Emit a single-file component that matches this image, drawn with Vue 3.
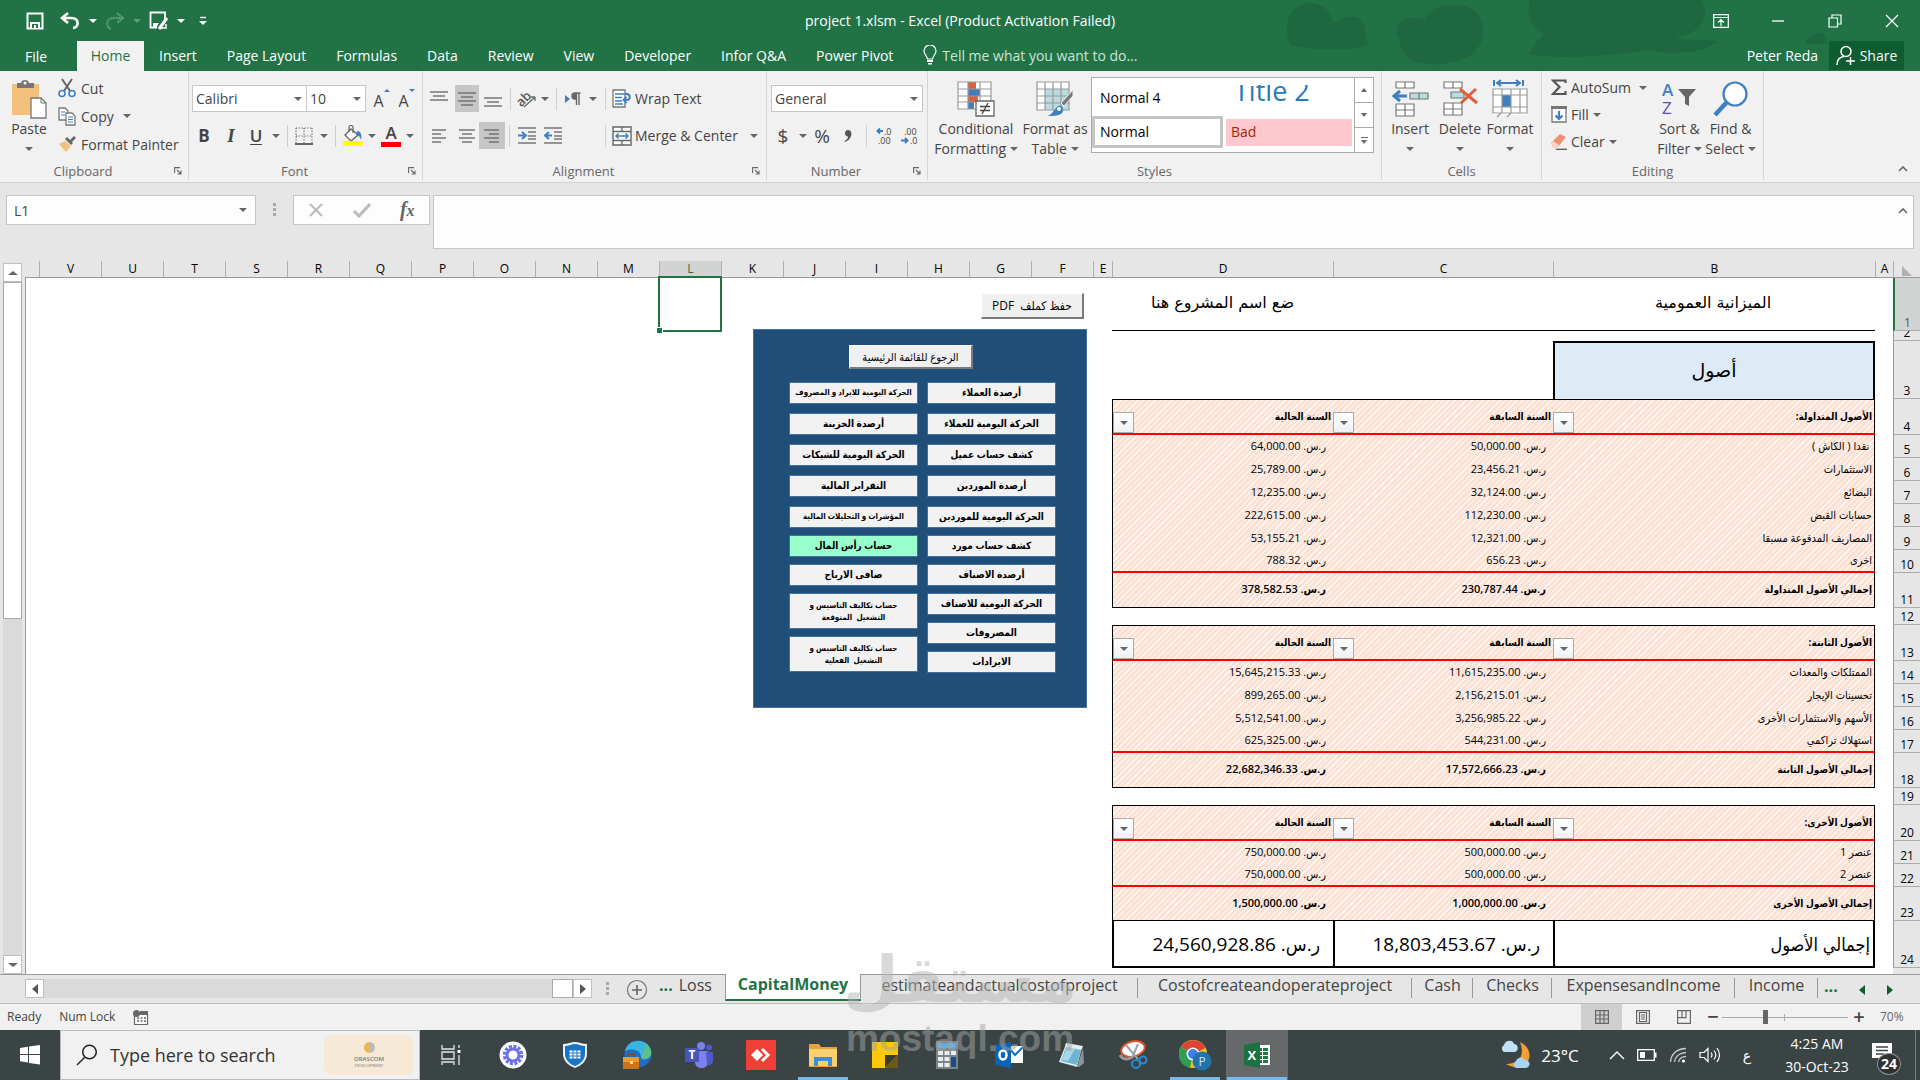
<script setup>
import { ref, h } from 'vue'

const g = '#6d6d6d'
const b = '#3f7fbf'
const lines = (rows) => rows.map(([x, y, w]) => `<path d="M${x} ${y}h${w}" stroke="${g}" stroke-width="1.4"/>`).join('')

const icons = {
  save: [18, 18, `<path d="M1.5 1.5h15v15h-15z" fill="none" stroke="#fff" stroke-width="2"/><path d="M4 10h10v7H4z" fill="#fff"/><path d="M6 12h6v4H6z" fill="#217346"/><path d="M8 13h2v4H8z" fill="#fff"/>`],
  undo: [20, 18, `<path d="M8 1L2 6l6 5M2 6h9c9 0 8 10 2 10" fill="none" stroke="#fff" stroke-width="2.6"/>`],
  redo: [20, 18, `<path d="M12 1l6 5-6 5M18 6H9C0 6 1 16 6 17" fill="none" stroke="#5d9d79" stroke-width="2.2" stroke-dasharray="2 .6"/>`],
  saveEdit: [20, 20, `<path d="M16 8V1.500H1.500v15H8" fill="none" stroke="#fff" stroke-width="1.800"/><path d="M4 12h6l-3 5H4z" fill="#fff"/><path d="M18 7l-8 11" stroke="#fff" stroke-width="3"/><path d="M12 17h5v-4" fill="none" stroke="#fff" stroke-width="1.500"/>`],
  custom: [8, 10, `<path d="M1 1.500h6" stroke="#fff" stroke-width="1.4"/><path d="M0 5h8L4 9z" fill="#fff"/>`],
  ribbonOpt: [16, 14, `<path d="M.7.7h14.600v12.600H.700zM.7 3.500h14.600M8 12V6M5 8.500l3-3 3 3" fill="none" stroke="#fff" stroke-width="1.2"/>`],
  min: [14, 14, `<path d="M1 7h12" stroke="#fff" stroke-width="1.3"/>`],
  restore: [14, 14, `<path d="M1 4h8.500v9H1zM4 4V1h9v9H9.500" fill="none" stroke="#fff" stroke-width="1.2"/>`],
  close: [14, 14, `<path d="M1 1l12 12M13 1L1 13" stroke="#fff" stroke-width="1.3"/>`],
  bulb: [14, 20, `<path d="M4.500 14c0-3-3.500-4-3.500-8a6 6 0 0112 0c0 4-3.500 5-3.500 8z" fill="none" stroke="#fff" stroke-width="1.2"/><path d="M4 15h6v2H4zM5 18h4v1.500H5z" fill="#fff"/>`],
  person: [20, 21, `<circle cx="10" cy="6.500" r="5" fill="none" stroke="#fff" stroke-width="1.5"/><path d="M1 20c0-5 3-8 7-8.500M10 16h9M14.500 12v8" fill="none" stroke="#fff" stroke-width="1.5"/>`],
  paste: [36, 40, `<path d="M1 5h27v31H1z" fill="#f2c07b"/><path d="M6 9V4h4c0-4 8-4 8 0h5v5z" fill="#777"/><circle cx="14" cy="4" r="1.500" fill="#fff"/><path d="M20 19h10l5 5v15H20z" fill="#fff" stroke="#777" stroke-width="1.300"/><path d="M30 19v5h5" fill="none" stroke="#777"/>`],
  cut: [18, 20, `<path d="M4 1l8 12M14 1L6 13" stroke="#666" stroke-width="2"/><circle cx="4" cy="15.500" r="3" fill="none" stroke="${b}" stroke-width="1.600"/><circle cx="14" cy="15.500" r="3" fill="none" stroke="${b}" stroke-width="1.600"/>`],
  copy: [18, 19, `<path d="M1 1h6l3 3v9H1z" fill="#fff" stroke="#777" stroke-width="1.300"/><path d="M3 5h4M3 8h4" stroke="${b}"/><path d="M8 6h6l3 3v9H8z" fill="#fff" stroke="#777" stroke-width="1.300"/><path d="M10 10h5M10 12.500h5M10 15h5" stroke="${b}" stroke-width="1.200"/>`],
  painter: [18, 17, `<path d="M1 8l6-3 6 5-5 6z" fill="#f2c07b"/><path d="M7 3l6 6 2-2-6-6zM12 4l4-4 2 2-4 4z" fill="#666"/>`],
  borders: [18, 18, `<path d="M1 1h16M1 9h16M1 1v15M9 1v15M17 1v15" fill="none" stroke="#666" stroke-width="1.200" stroke-dasharray="1.200 1.600"/><path d="M0 17h18" stroke="#444" stroke-width="1.600"/>`],
  fill: [20, 21, `<path d="M8 4l7 6-7 6-6-6z" fill="#fff" stroke="#666" stroke-width="1.300"/><path d="M6 7V2c0-2 4-2 4 0v6" fill="none" stroke="#666" stroke-width="1.200"/><path d="M14 6c4 0 5 4 4 9-1-3-2-5-5-5z" fill="${b}"/><path d="M0 16h20v5H0z" fill="#ff0"/>`],
  top: [18, 16, lines([[0, 1, 18], [3, 5, 12], [0, 9, 18]])],
  mid: [18, 16, lines([[0, 2, 18], [3, 6, 12], [0, 10, 18], [3, 14, 12]])],
  bot: [18, 16, lines([[0, 7, 18], [3, 11, 12], [0, 15, 18]])],
  left: [16, 16, lines([[1, 2, 14], [1, 6, 9], [1, 10, 14], [1, 14, 9]])],
  center: [16, 16, lines([[0, 2, 16], [3, 6, 10], [0, 10, 16], [3, 14, 10]])],
  right: [16, 16, lines([[0, 2, 15], [5, 6, 10], [0, 10, 15], [5, 14, 10]])],
  orient: [20, 18, `<text x="-1" y="13" font-size="13" font-weight="600" font-family="Open Sans" fill="#555" transform="rotate(-45 7 9)">ab</text><path d="M7 17L18 7M18 7v4M18 7h-4" stroke="#666" stroke-width="1.300" fill="none"/>`],
  para: [16, 14, `<path d="M0 3l5 4-5 4z" fill="${b}"/><path d="M15.500 1H10a3 3 0 000 6h1M11.500 1v12M14 1v12" fill="none" stroke="#666" stroke-width="1.400"/><path d="M10 1.500h1.500V7H10a2.700 2.700 0 010-5.500z" fill="#666"/>`],
  indentIn: [18, 17, lines([[0, 1, 18], [10, 5, 8], [10, 9, 8], [10, 12, 8], [0, 16, 18]]) + `<path d="M0 8.500h6M4 5l4 3.500-4 3.500" fill="none" stroke="${b}" stroke-width="2"/>`],
  indentOut: [18, 17, lines([[0, 1, 18], [10, 5, 8], [10, 9, 8], [10, 12, 8], [0, 16, 18]]) + `<path d="M8 8.500H2M5 5L1 8.500 5 12" fill="none" stroke="${b}" stroke-width="2"/>`],
  wrap: [20, 19, `<path d="M1 1h12v17H1z" fill="#fff" stroke="#777" stroke-width="1.300"/><path d="M3 5h13M3 8.500h7M3 12h7M3 15h8" stroke="${b}" stroke-width="1.300"/><path d="M14 5c5 0 5 6 0 6h-2M14.500 8l-3 3 3 3" fill="none" stroke="${b}" stroke-width="2"/>`],
  merge: [20, 20, `<path d="M1 1h18v18H1zM1 5.500h18M1 14.500h18M10 1v4.500M10 14.500V19" fill="#fff" stroke="#666" stroke-width="1.400"/><path d="M4 10h12M6.500 7.500L4 10l2.500 2.500M13.500 7.500L16 10l-2.500 2.500" fill="none" stroke="${b}" stroke-width="1.500"/>`],
  comma: [8, 14, `<path d="M4 1c3 0 4 3 3 6-1 3-3 5-6 6l-.5-1C3 11 4 9 4 7.500 0 7.500 0 1 4 1z" fill="#555"/>`],
  decInc: [18, 18, `<path d="M7 4H2M4 1.500L1.500 4 4 6.500" fill="none" stroke="${b}" stroke-width="2"/><text x="8" y="8" font-size="9" font-family="Open Sans" fill="#444">.0</text><text x="2" y="17" font-size="9" font-family="Open Sans" fill="#444">.00</text>`],
  decDec: [18, 18, `<text x="3" y="8" font-size="9" font-family="Open Sans" fill="#444">.00</text><path d="M0 13.500h6M4 11l2.500 2.500L4 16" fill="none" stroke="${b}" stroke-width="2"/><text x="9" y="17" font-size="9" font-family="Open Sans" fill="#444">.0</text>`],
  cond: [38, 36, `<path d="M1 1h33v27H1z" fill="#fff"/><path d="M11 1h8v7h-8zM11 15h10v6H11z" fill="#dd5f3c"/><path d="M11 8h12v7H11zM11 21h6v7h-6z" fill="${b}"/><path d="M1 1h33v27H1zM11 1v27M23 1v27M1 8h33M1 15h33M1 21h33" fill="none" stroke="#999" stroke-width="1.200"/><path d="M19 20h18v15H19z" fill="#fff" stroke="#666" stroke-width="1.300"/><path d="M23 25.500h10M23 29.500h10M31 22l-6 11" stroke="#444" stroke-width="1.300"/>`],
  fmtTable: [38, 36, `<path d="M1 1h32v28H1z" fill="#fff"/><path d="M9 8h24v21H9z" fill="#b9dbe1"/><path d="M1 1h32v28H1zM9 1v28M17 1v28M25 1v28M1 8h32M1 15h32M1 22h32" fill="none" stroke="#999" stroke-width="1.200"/><path d="M37 9v6L28 25l-3-3z" fill="#777" stroke="#f1f1f1"/><path d="M20 27c3-4 8-2 7 3-1 5-10 5-16 5 5-1 6-5 9-8z" fill="${b}"/><circle cx="23" cy="28" r="2" fill="#fff"/>`],
  insert: [38, 38, `<path d="M5 2h18v6H5zM14 2v6M5 24h18v12H5zM14 24v12M5 30h18" fill="#fff" stroke="#777" stroke-width="1.200"/><path d="M19 13h18v6H19zM28 13v6" fill="#b9dbe1" stroke="#777" stroke-width="1.200"/><path d="M16 16H4M9 11l-6 5 6 5" fill="none" stroke="${b}" stroke-width="3"/>`],
  del: [38, 38, `<path d="M3 2h18v6H3zM12 2v6M3 23h18v12H3zM12 23v12M3 29h18" fill="#fff" stroke="#777" stroke-width="1.200"/><path d="M10 12h13v6H10z" fill="#b9dbe1" stroke="#777" stroke-width="1.200"/><path d="M19 9l17 14M35 9L20 23" stroke="#dd5f3c" stroke-width="3"/>`],
  format: [38, 38, `<path d="M3 0v6M32 0v6M6 3h23M10 0L6 3l4 3M25 0l4 3-4 3" fill="none" stroke="${b}" stroke-width="2"/><path d="M2 9h34v26H2z" fill="#fff"/><path d="M11 15h9v12h-9z" fill="${b}"/><path d="M2 9h34v24H2zM2 15h34M2 27h34M11 9v24M20 9v24M29 9v24M6 37l4-4M16 37l4-4" fill="none" stroke="#999" stroke-width="1.200"/>`],
  sigma: [16, 17, `<path d="M14.500 4V1.500H2L8.500 8 2 15h12.500v-3" fill="none" stroke="#555" stroke-width="2.200"/>`],
  fillDown: [16, 17, `<path d="M1 1h14v15H1z" fill="#fff" stroke="#777" stroke-width="1.300"/><path d="M0 0h16v3H0z" fill="#777"/><path d="M8 5v8M4.500 9.500L8 13l3.500-3.500" fill="none" stroke="${b}" stroke-width="2.200"/>`],
  eraser: [16, 17, `<path d="M0 10L9 1l6 3-8 10H2z" fill="#ec8f73"/><path d="M0 10l2-2 6 4-2 3H2z" fill="#f7d3c7"/><path d="M5 16.300h11" stroke="#555" stroke-width="1.300"/>`],
  sort: [36, 36, `<text x="0" y="15" font-size="17" font-weight="600" font-family="Open Sans" fill="${b}">A</text><text x="0" y="33" font-size="17" font-family="Open Sans" fill="#5a4fb0">Z</text><path d="M16 8h18l-7 8v9l-4-2v-7z" fill="#666"/>`],
  find: [36, 36, `<circle cx="22" cy="13" r="11.500" fill="#fff" stroke="${b}" stroke-width="2.200"/><path d="M14 21L2 34" stroke="${b}" stroke-width="4.500"/>`],
  launch: [8, 8, `<path d="M.6 6V.600H6M3 3l4 4M7 3.500V7H3.500" fill="none" stroke="#666" stroke-width="1.100"/>`],
  chevUp: [10, 6, `<path d="M1 5l4-4 4 4" fill="none" stroke="#666" stroke-width="1.600"/>`],
  cancel: [16, 16, `<path d="M2 2l12 12M14 2L2 14" stroke="#bbb" stroke-width="2"/>`],
  check: [18, 15, `<path d="M1 8l5 5L17 1" fill="none" stroke="#bbb" stroke-width="3"/>`],
  plus: [22, 22, `<circle cx="11" cy="11" r="9.500" fill="none" stroke="#777" stroke-width="1.200"/><path d="M11 6v10M6 11h10" stroke="#666" stroke-width="1.600"/>`],
  macro: [16, 15, `<path d="M1.500 3.500h13v11h-13z" fill="#fff" stroke="#666" stroke-width="1.200"/><path d="M7 1h8v4H7z" fill="#666"/><circle cx="3.500" cy="3.500" r="3.500" fill="#666"/><path d="M4 8h9M4 11h9" stroke="#666" stroke-dasharray="2 1.500" stroke-width="1.300"/>`],
  vGrid: [14, 14, `<path d="M.6.6h12.800v12.800H.600zM5 .6v12.800M9 .6v12.800M.6 5h12.800M.6 9h12.800" fill="none" stroke="#666" stroke-width="1.200"/>`],
  vPage: [14, 14, `<path d="M.6.6h12.800v12.800H.600zM3.500 2.500h7v9h-7zM5 5h4M5 7h4M5 9h4" fill="none" stroke="#666" stroke-width="1.200"/>`],
  vBreak: [14, 14, `<path d="M.6.6h12.800v12.800H.600zM5 .6v7h4v-7M.6 7.600h4.400M9 .6v7" fill="none" stroke="#666" stroke-width="1.200"/>`],
  win: [22, 22, `<path d="M1 4l8-1.300V10H1zM10 2.500L21 1v9H10zM1 11h8v7.500L1 17.300zM10 11h11v9.500L10 19z" fill="#fff"/>`],
  lens: [22, 22, `<circle cx="13.500" cy="8" r="6.800" fill="none" stroke="#222" stroke-width="1.500"/><path d="M9 13l-8 8" stroke="#222" stroke-width="1.500"/>`],
  taskview: [22, 22, `<path d="M2 1v4h12V1M2 8h12v7H2zM2 21v-3h12v3M19 1v3M19 11v10" fill="none" stroke="#e8e8e8" stroke-width="1.300"/><path d="M17.500 6h3v3h-3z" fill="#fff"/>`],
  gear: [28, 28, `<circle cx="14" cy="14" r="13.500" fill="#fff"/><circle cx="14" cy="14" r="8" fill="none" stroke="#6b72ea" stroke-width="4.500" stroke-dasharray="2.800 1.400"/><circle cx="14" cy="14" r="6" fill="none" stroke="#6b72ea" stroke-width="3"/><circle cx="14" cy="14" r="2" fill="#fff"/>`],
  shield: [26, 28, `<path d="M1 3c5 0 8-2 12-2s7 2 12 2v10c0 7-6 12-12 14C7 25 1 20 1 13z" fill="#e8f2fa"/><path d="M3 5c4 0 7-2 10-2s6 2 10 2v8c0 6-5 10-10 12C8 23 3 19 3 13z" fill="#1874c4"/><path d="M7 9h12v9H7zM7 12h12M7 15h12M11 9v9M15 9v9" fill="#fff" stroke="#1874c4" stroke-width="1"/>`],
  edge: [30, 30, `<circle cx="16" cy="14" r="13.500" fill="#1c6fc4"/><path d="M16 1c10 0 14 8 13 13-1 6-10 7-10 3 0-5-6-10-16-6C5 4 10 1 16 1z" fill="#3cb4e0"/><path d="M23 3c6 4 7 9 6 12-2 5-10 5-10 2 3-4 4-9 4-14z" fill="#5fbf8a"/><path d="M1 17h16v12H1z" fill="#c9731c"/><path d="M1 17h16v5H1z" fill="#e79a35"/><path d="M6 17v-3h6v3" fill="none" stroke="#8a4a10" stroke-width="1.500"/><path d="M8 21h3v3H8z" fill="#ffe08a"/>`],
  teams: [30, 28, `<circle cx="17" cy="5" r="4" fill="#7b83eb"/><circle cx="25" cy="6.500" r="3" fill="#5059c9"/><path d="M11 10h13v11c0 8-13 8-13 0z" fill="#7b83eb"/><path d="M22 11h7v9c0 3-3 5-6 4z" fill="#5059c9"/><path d="M1 7h14v14H1z" fill="#4b53bc"/><text x="4.500" y="18" font-size="12" font-weight="700" font-family="Open Sans" fill="#fff">T</text>`],
  anydesk: [30, 30, `<path d="M0 0h30v30H0z" fill="#ee4036"/><path d="M11 9l6 6-6 6-6-6z" fill="#fff"/><path d="M16 9l6 6-6 6" fill="none" stroke="#fff" stroke-width="3"/>`],
  explorer: [30, 26, `<path d="M1 2h10l2 3h16v20H1z" fill="#e9a23b"/><path d="M1 7h28v17H1z" fill="#f9cf6f"/><path d="M6 24v-9h18v9h-4v-5H10v5z" fill="#3b8fd6"/>`],
  sticky: [28, 28, `<path d="M1 1h26v26H1z" fill="#fdc80b"/><path d="M14 27V14h13z" fill="#3a3a36"/><path d="M14 27l13-13v13z" fill="#6b5a16"/>`],
  calc: [24, 30, `<path d="M1 1h22v28H1z" fill="#7c8489"/><path d="M3 3h18v5H3z" fill="#55b0ea"/><path d="M3 11h5v4H3zM9.500 11h5v4h-5zM3 17h5v4H3zM9.500 17h5v4h-5zM3 23h5v4H3zM9.500 23h5v4h-5zM16 11h5v4h-5z" fill="#e9edf0"/><path d="M16 17h5v10h-5z" fill="#174e86"/>`],
  outlook: [30, 28, `<path d="M14 5h15v17H14z" fill="#fff"/><path d="M14 6l7 8 8-8" fill="none" stroke="#0f6fc0" stroke-width="2"/><path d="M1 4l16-3v26L1 24z" fill="#0a64b4"/><ellipse cx="9" cy="14" rx="3.500" ry="4.500" fill="none" stroke="#fff" stroke-width="2.500"/>`],
  notepad: [28, 28, `<path d="M9 3l16 3-5 20-18-5z" fill="#dff0f6"/><path d="M9 6l15 3-4 15-16-4z" fill="#6fb4d2"/><path d="M10 6l8 2-7 12-6-1z" fill="#a9d6e8"/><path d="M9 2l17 3-1 3L8 5z" fill="#e9edf0"/><path d="M2 21l18 5 6-19 1 15-5 4z" fill="#8a9298"/>`],
  snip: [30, 30, `<ellipse cx="15" cy="9" rx="12" ry="7.500" fill="#fff" stroke="#d9502c" stroke-width="2" transform="rotate(-15 15 9)"/><path d="M8 5l12 14M20 4l-6 14" stroke="#9aa3a8" stroke-width="2"/><path d="M2 15c3 5 8 5 12 2" fill="none" stroke="#999" stroke-width="3"/><circle cx="18" cy="24" r="4" fill="none" stroke="#2b8ad6" stroke-width="2"/><circle cx="25" cy="20" r="3.500" fill="none" stroke="#2b8ad6" stroke-width="2"/>`],
  chrome: [34, 32, `<circle cx="15" cy="15" r="14" fill="#f3c31c"/><path d="M15 15L3 8a14 14 0 0124.500 1z" fill="#dd4336"/><path d="M15 15l-3 14A14 14 0 013 8z" fill="#2f9e52"/><circle cx="15" cy="15" r="6.500" fill="#fff"/><circle cx="15" cy="15" r="5" fill="#3f7fe8"/><circle cx="24" cy="22" r="9.500" fill="#2272ad"/><text x="20.500" y="26.500" font-size="12" font-family="Open Sans" fill="#cfe4f2">P</text>`],
  excel: [28, 28, `<path d="M12 4h15v20H12z" fill="#fff"/><path d="M15 7h4v3h-4zM20 7h5v3h-5zM15 11h4v3h-4zM20 11h5v3h-5zM15 15h4v3h-4zM20 15h5v3h-5zM15 19h4v3h-4zM20 19h5v3h-5z" fill="#1e7a46"/><path d="M1 4l16-3v26L1 24z" fill="#1a7141"/><text x="4.500" y="19" font-size="13" font-weight="700" font-family="Open Sans" fill="#fff">X</text>`],
  weather: [32, 30, `<path d="M20 2c8 4 12 12 8 19-4 7-14 8-22 3 14 0 19-9 14-22z" fill="#f0a030"/><path d="M4 12a4 4 0 010-7c1-5 9-6 10-1 5 0 5 8 0 8z" fill="#bfe0f7"/><path d="M16 28a4 4 0 010-7c1-4 8-5 9-1 6 0 6 8 0 8z" fill="#a9d4f2"/>`],
  up: [16, 10, `<path d="M1 9l7-7 7 7" fill="none" stroke="#fff" stroke-width="1.400"/>`],
  battery: [20, 12, `<path d="M.7.7h16.600v10.600H.700z" fill="none" stroke="#fff" stroke-width="1.300"/><path d="M3 3h5v6H3zM18 3.500h1.500v5H18z" fill="#fff"/>`],
  wifi: [18, 16, `<path d="M1.500 15C2 7 8 1.500 17 1.500M5.500 15C6 10 10 6 17 5.500M9.500 15c.500-3 3.500-5.500 7.500-5.500" fill="none" stroke="#ccc" stroke-width="1.300"/><circle cx="14.500" cy="14" r="1.600" fill="#fff"/>`],
  volume: [22, 16, `<path d="M1 5.500h4l4-4v13l-4-4H1zM12 5.500q2 2.500 0 5M15 3.500q3.500 4.500 0 9M18 1q5 7 0 14" fill="none" stroke="#fff" stroke-width="1.200"/>`],
  note: [22, 20, `<path d="M1 1h20v15h-9l-4 4v-4H1z" fill="#fff"/><path d="M5 5h12M5 8.500h12M5 12h8" stroke="#3b4445" stroke-width="1.300"/>`],
}

const Icon = (p) => {
  const [w, ht, s] = icons[p.n]
  return h('svg', { viewBox: `0 0 ${w} ${ht}`, width: w, height: ht, innerHTML: s, 'aria-hidden': 'true', style: { display: 'block', flex: 'none' } })
}
Icon.props = ['n']

const menu = ['Insert', 'Page Layout', 'Formulas', 'Data', 'Review', 'View', 'Developer', 'Infor Q&A', 'Power Pivot']
const qat = [['', 18], ['save', 34], ['undo', 36], ['caret', 10], ['redo', 34], ['dimcaret', 10], ['saveEdit', 34], ['caret', 10], ['custom', 34]]
const winButtons = ['ribbonOpt', 'min', 'restore', 'close']

const fontTools = [['B', 30], ['I', 24], ['U', 26], ['caret', 14], ['sep', 8], ['borders', 26], ['caret', 14], ['sep', 8], ['fill', 28], ['caret', 10], ['A', 28], ['caret', 10]]
const alignTop = [['top', 32], ['mid', 24, 1], ['bot', 28], ['sep', 6], ['orient', 28], ['caret', 8], ['sep', 14], ['para', 20], ['caret', 20], ['sep', 4]]
const alignBottom = [['left', 32], ['center', 24], ['right', 26, 1], ['sep', 8], ['indentIn', 28], ['indentOut', 24], ['', 38], ['sep', 4]]
const numTools = [['$', 32], ['caret', 8], ['%', 30], ['comma', 22], ['sep', 14], ['decInc', 24], ['decDec', 26]]

const Tools = (p) => h('div', { class: 'tools' }, p.items.map(([n, w, on]) => {
  const style = { width: w + 'px' }
  if (n === 'sep') return h('i', { class: 'tool-sep', style })
  if (n === '') return h('i', { style })
  if (n === 'caret' || n === 'dimcaret') return h('button', { class: ['tool', n + '-tool'], style, 'aria-label': 'More' }, [h('i', { class: 'caret' })])
  if (icons[n]) return h('button', { class: ['tool', on && 'on'], style, 'aria-label': n }, [h(Icon, { n })])
  return h('button', { class: ['tool', 'glyph', 'glyph-' + ({ $: 'dollar', '%': 'pct' }[n] || n)], style }, [h('span', n)])
}))
Tools.props = ['items']

const letters = ['A', 'B', 'C', 'D', 'E', 'F', 'G', 'H', 'I', 'J', 'K', 'L', 'M', 'N', 'O', 'P', 'Q', 'R', 'S', 'T', 'U', 'V']
const rest = letters.slice(5)
const money = (n) => 'ر.س. ' + n
const now = 'السنة الحالية'
const before = 'السنة السابقة'

const blocks = [
  { kind: 'plain', rows: [
    { n: 1, h: 53, k: 'title', v: ['الميزانية العمومية', '', 'ضع اسم المشروع هنا'] },
    { n: 2, h: 10, k: 'blank', v: ['', '', ''] },
    { n: 3, h: 58, k: 'box', v: ['أصول', '', ''] },
  ] },
  { kind: 'asset', rows: [
    { n: 4, h: 36, k: 'head', v: ['الأصول المتداولة:', before, now] },
    { n: 5, h: 23, k: 'item', v: ['\u00a0نقدا ( الكاش )', '50,000.00', '64,000.00'] },
    { n: 6, h: 23, k: 'item', v: ['الاستثمارات', '23,456.21', '25,789.00'] },
    { n: 7, h: 23, k: 'item', v: ['البضائع', '32,124.00', '12,235.00'] },
    { n: 8, h: 23, k: 'item', v: ['حسابات القبض', '112,230.00', '222,615.00'] },
    { n: 9, h: 23, k: 'item', v: ['المصاريف المدفوعة مسبقا', '12,321.00', '53,155.21'] },
    { n: 10, h: 23, k: 'item last', v: ['اخرى', '656.23', '788.32'] },
    { n: 11, h: 35, k: 'sum', v: ['إجمالي الأصول المتداولة', '230,787.44', '378,582.53'] },
  ] },
  { kind: 'plain', rows: [{ n: 12, h: 17, k: 'blank', v: ['', '', ''] }] },
  { kind: 'asset', rows: [
    { n: 13, h: 36, k: 'head', v: ['الأصول الثابتة:', before, now] },
    { n: 14, h: 23, k: 'item', v: ['الممتلكات والمعدات', '11,615,235.00', '15,645,215.33'] },
    { n: 15, h: 23, k: 'item', v: ['تحسينات الإيجار', '2,156,215.01', '899,265.00'] },
    { n: 16, h: 23, k: 'item', v: ['الأسهم والاستثمارات الأخرى', '3,256,985.22', '5,512,541.00'] },
    { n: 17, h: 23, k: 'item last', v: ['استهلاك تراكمي', '544,231.00', '625,325.00'] },
    { n: 18, h: 35, k: 'sum', v: ['إجمالي الأصول الثابتة', '17,572,666.23', '22,682,346.33'] },
  ] },
  { kind: 'plain', rows: [{ n: 19, h: 17, k: 'blank', v: ['', '', ''] }] },
  { kind: 'asset', rows: [
    { n: 20, h: 36, k: 'head', v: ['الأصول الأخرى:', before, now] },
    { n: 21, h: 23, k: 'item', v: ['عنصر 1', '500,000.00', '750,000.00'] },
    { n: 22, h: 23, k: 'item last', v: ['عنصر 2', '500,000.00', '750,000.00'] },
    { n: 23, h: 34, k: 'sum', v: ['إجمالي الأصول الأخرى', '1,000,000.00', '1,500,000.00'] },
  ] },
  { kind: 'plain', rows: [{ n: 24, h: 47, k: 'grand', v: ['إجمالي الأصول', '18,803,453.67', '24,560,928.86'] }] },
]
const isMoney = (k) => /item|sum|grand/.test(k)

const navRight = [
  ['أرصدة العملاء', 'الحركة اليومية للعملاء', 'كشف حساب عميل', 'أرصدة الموردين', 'الحركة اليومية للموردين'],
  ['كشف حساب مورد', 'أرصدة الاصناف', 'الحركة اليومية للاصناف', 'المصروفات', 'الايرادات'],
]
const navLeft = [
  ['الحركة اليومية للايراد و المصروف', 'أرصدة الخزينة', 'الحركة اليومية للشيكات', 'التقرابر المالية', 'المؤشرات و التحليلات المالية'],
  ['حساب رأس المال', 'صافى الارباح', 'حساب تكاليف التاسيس و التشغيل  المتوقعة', 'حساب تكاليف التاسيس و التشغيل  الفعلية'],
]
const small = new Set([navLeft[0][0], navLeft[0][4], navLeft[1][2], navLeft[1][3]])
const tall = new Set([navLeft[1][2], navLeft[1][3]])

const apps = ['taskview', 'gear', 'shield', 'edge', 'teams', 'anydesk', 'explorer', 'sticky', 'calc', 'outlook', 'notepad', 'snip', 'chrome', 'excel']
const running = ['explorer', 'chrome', 'excel']
const zoom = ref(28)
const cell = ref('L1')
</script>

<template>
  <div class="app">
    <header class="top">
      <svg class="art" viewBox="0 0 600 71" width="600" height="71" aria-hidden="true">
        <path d="M45 45C35 20 50 2 66 3s20 12 22 20c20-12 36-8 32 18l5 3c-20 8-60 6-80 1zM155 40c-10-20 8-26 24-20C190-2 235 0 238 26c2 20-10 36-45 38s-38-18-38-24zM285 0h172c10 20-4 34-28 38 20 4 40 0 44 4-20 14-60 12-70 8-40 6-90 10-118 4 4-12 10-14 14-20-14-8-18-20-14-34zM560 44c6-16 24-14 22 0z" fill="#1f673f" />
      </svg>
      <div class="titlebar">
        <Tools class="qat" :items="qat" />
        <h1>project 1.xlsm - Excel (Product Activation Failed)</h1>
        <div class="win">
          <button v-for="w in winButtons" :key="w" :aria-label="w"><Icon :n="w" /></button>
        </div>
      </div>
      <nav class="menu">
        <button class="file">File</button>
        <button class="home">Home</button>
        <button v-for="m in menu" :key="m">{{ m }}</button>
        <label class="tell"><Icon n="bulb" /><input type="text" placeholder="Tell me what you want to do..." /></label>
        <span class="user">Peter Reda</span>
        <button class="share"><Icon n="person" />Share</button>
      </nav>
    </header>

    <section class="ribbon">
      <div class="group clipboard">
        <div class="body">
          <button class="big"><Icon n="paste" /><span>Paste</span><i class="caret"></i></button>
          <div class="list">
            <button><Icon n="cut" />Cut</button>
            <button><Icon n="copy" />Copy<i class="caret wide"></i></button>
            <button><Icon n="painter" />Format Painter</button>
          </div>
        </div>
        <footer class="opts">Clipboard<button aria-label="Clipboard options"><Icon n="launch" /></button></footer>
      </div>
      <div class="group font">
        <div class="body rows">
          <div class="row">
            <span class="combo name"><select aria-label="Font"><option>Calibri</option></select><i class="caret"></i></span>
            <span class="combo size"><select aria-label="Font size"><option>10</option></select><i class="caret"></i></span>
            <button class="grow" aria-label="Grow font">A<i class="mark up"></i></button>
            <button class="grow" aria-label="Shrink font">A<i class="mark"></i></button>
          </div>
          <Tools :items="fontTools" />
        </div>
        <footer class="opts">Font<button aria-label="Font options"><Icon n="launch" /></button></footer>
      </div>
      <div class="group align">
        <div class="body rows">
          <div class="row"><Tools :items="alignTop" /><button class="text"><Icon n="wrap" />Wrap Text</button></div>
          <div class="row"><Tools :items="alignBottom" /><button class="text"><Icon n="merge" />Merge &amp; Center<i class="caret wide"></i></button></div>
        </div>
        <footer class="opts">Alignment<button aria-label="Alignment options"><Icon n="launch" /></button></footer>
      </div>
      <div class="group number">
        <div class="body rows">
          <div class="row"><span class="combo fmt"><select aria-label="Number format"><option>General</option></select><i class="caret"></i></span></div>
          <Tools :items="numTools" />
        </div>
        <footer class="opts">Number<button aria-label="Number options"><Icon n="launch" /></button></footer>
      </div>
      <div class="group styles">
        <div class="body">
          <button class="big cf"><Icon n="cond" /><span>Conditional</span><span>Formatting <i class="caret"></i></span></button>
          <button class="big ft"><Icon n="fmtTable" /><span>Format as</span><span>Table <i class="caret"></i></span></button>
          <div class="gallery">
            <div class="swatches">
              <button>Normal 4</button>
              <button class="title2"><span>Title 2</span></button>
              <button class="sel">Normal</button>
              <button class="bad">Bad</button>
            </div>
            <div class="scroller">
              <button aria-label="Previous styles"><i class="caret flip"></i></button>
              <button aria-label="Next styles"><i class="caret"></i></button>
              <button class="more" aria-label="All styles"><i class="caret"></i></button>
            </div>
          </div>
        </div>
        <footer>Styles</footer>
      </div>
      <div class="group cells">
        <div class="body">
          <button class="big"><Icon n="insert" /><span>Insert</span><i class="caret"></i></button>
          <button class="big"><Icon n="del" /><span>Delete</span><i class="caret"></i></button>
          <button class="big"><Icon n="format" /><span>Format</span><i class="caret"></i></button>
        </div>
        <footer>Cells</footer>
      </div>
      <div class="group editing">
        <div class="body">
          <div class="list">
            <button><Icon n="sigma" />AutoSum<i class="caret after"></i></button>
            <button><Icon n="fillDown" />Fill<i class="caret"></i></button>
            <button><Icon n="eraser" />Clear<i class="caret"></i></button>
          </div>
          <button class="big"><Icon n="sort" /><span>Sort &amp;</span><span>Filter <i class="caret"></i></span></button>
          <button class="big"><Icon n="find" /><span>Find &amp;</span><span>Select <i class="caret"></i></span></button>
        </div>
        <footer>Editing</footer>
      </div>
      <button class="collapse" aria-label="Collapse the ribbon"><Icon n="chevUp" /></button>
    </section>

    <section class="formula">
      <div class="namebox"><input v-model="cell" aria-label="Name box" /><i class="caret"></i></div>
      <i class="grip"></i>
      <div class="fx">
        <button aria-label="Cancel"><Icon n="cancel" /></button>
        <button aria-label="Enter"><Icon n="check" /></button>
        <button class="fn" aria-label="Insert function">f<small>x</small></button>
      </div>
      <div class="bar"><textarea aria-label="Formula"></textarea><Icon n="chevUp" /></div>
    </section>

    <main class="work">
      <div class="vscroll">
        <button aria-label="Scroll up"><i class="caret flip"></i></button>
        <div class="track"><i class="thumb"></i></div>
        <button aria-label="Scroll down"><i class="caret"></i></button>
      </div>
      <div class="sheet" dir="rtl">
        <table>
          <colgroup>
            <col class="c-num" /><col class="c-a" /><col class="c-b" /><col class="c-c" /><col class="c-d" /><col class="c-e" />
            <col v-for="l in rest" :key="l" class="c-std" />
            <col />
          </colgroup>
          <thead>
            <tr>
              <th class="corner"><i></i></th>
              <th v-for="l in letters" :key="l" :class="{ active: l === 'L' }">{{ l }}</th>
              <th class="end"></th>
            </tr>
          </thead>
          <tbody v-for="(blk, bi) in blocks" :key="bi" :class="blk.kind">
            <tr v-for="r in blk.rows" :key="r.n" :class="r.k" :style="{ height: r.h + 'px' }">
              <th :class="{ active: r.n === 1 }"><span :style="{ height: r.h - 1 + 'px' }">{{ r.n }}</span></th>
              <td></td>
              <td class="b">{{ r.v[0] }}<button v-if="r.k === 'head'" class="filter" aria-label="Filter"><i class="caret"></i></button></td>
              <td class="c">{{ isMoney(r.k) ? money(r.v[1]) : r.v[1] }}<button v-if="r.k === 'head'" class="filter" aria-label="Filter"><i class="caret"></i></button></td>
              <td class="d">{{ isMoney(r.k) ? money(r.v[2]) : r.v[2] }}<button v-if="r.k === 'head'" class="filter" aria-label="Filter"><i class="caret"></i></button></td>
              <td></td>
              <td v-for="l in rest" :key="l" :class="{ cursor: r.n === 1 && l === 'L' }"></td>
              <td></td>
            </tr>
          </tbody>
        </table>
        <button class="pdf">حفظ كملف &nbsp;PDF</button>
        <div class="panel">
          <button class="back">الرجوع للقائمة الرئيسية</button>
          <div class="cols">
            <div v-for="(col, ci) in [navRight, navLeft]" :key="ci" class="col">
              <div v-for="(grp, gi) in col" :key="gi" class="grp">
                <button v-for="t in grp" :key="t" :class="{ small: small.has(t), tall: tall.has(t), current: t === navLeft[1][0] }">{{ t }}</button>
              </div>
            </div>
          </div>
        </div>
      </div>
    </main>

    <section class="tabs">
      <div class="hscroll">
        <button aria-label="Scroll left"><i class="caret west"></i></button>
        <div class="track"><i class="thumb"></i></div>
        <button aria-label="Scroll right"><i class="caret east"></i></button>
      </div>
      <i class="grip"></i>
      <button class="add" aria-label="New sheet"><Icon n="plus" /></button>
      <button class="loss"><b>...</b>Loss</button>
      <button class="current">CapitalMoney</button>
      <button class="s1">estimateandactualcostofproject</button>
      <button class="s2">Costofcreateandoperateproject</button>
      <button class="s3">Cash</button>
      <button class="s4">Checks</button>
      <button class="s5">ExpensesandIncome</button>
      <button class="s6">Income</button>
      <span class="dots">...</span>
      <button class="arrow" aria-label="Previous sheet"><i class="caret west"></i></button>
      <button class="arrow" aria-label="Next sheet"><i class="caret east"></i></button>
    </section>

    <section class="status">
      <span>Ready</span><span>Num Lock</span><Icon n="macro" />
      <div class="views">
        <button class="on" aria-label="Normal view"><Icon n="vGrid" /></button>
        <button aria-label="Page layout view"><Icon n="vPage" /></button>
        <button aria-label="Page break view"><Icon n="vBreak" /></button>
      </div>
      <button class="pm" aria-label="Zoom out">−</button>
      <input v-model="zoom" type="range" min="0" max="82" aria-label="Zoom" />
      <button class="pm" aria-label="Zoom in">+</button>
      <span class="pct">70%</span>
    </section>

    <footer class="taskbar">
      <button class="start" aria-label="Start"><Icon n="win" /></button>
      <label class="search">
        <Icon n="lens" /><input type="text" placeholder="Type here to search" />
        <span class="card"><i></i><b>ORASCOM</b><small>DEVELOPMENT</small></span>
      </label>
      <button v-for="a in apps" :key="a" class="appbtn" :class="{ running: running.includes(a), front: a === 'excel' }" :aria-label="a"><Icon :n="a" /></button>
      <div class="tray">
        <Icon n="weather" /><span class="temp">23°C</span>
        <button aria-label="Show hidden icons"><Icon n="up" /></button>
        <Icon n="battery" /><Icon n="wifi" /><Icon n="volume" />
        <span class="lang">ع</span>
        <div class="clock"><span>4:25 AM</span><span>30-Oct-23</span></div>
        <button class="notes" aria-label="Notifications"><Icon n="note" /><em>24</em></button>
      </div>
    </footer>

    <div class="mark-layer" aria-hidden="true"><span class="ar">مستقل</span><span class="en">mostaql.com</span></div>
  </div>
</template>

<style>
body { margin: 0; background: #e6e6e6; }
.tools { display: flex; height: 27px; }
.tools .tool { display: flex; align-items: center; justify-content: center; padding: 0; height: 27px; overflow: visible; }
.tools .tool.on { background: #c6c6c6; }
.tools .tool-sep { background: linear-gradient(#d0d0d0, #d0d0d0) center / 1px 22px no-repeat; }
.tools .glyph { font-size: 17px; font-weight: 600; color: #444; }
.tools .glyph-B { font-weight: 700; }
.tools .glyph-I { font-family: "Liberation Serif", serif; font-style: italic; font-weight: 700; font-size: 19px; }
.tools .glyph-U span { border-bottom: 1px solid #444; line-height: 17px; }
.tools .glyph-A span { border-bottom: 5px solid #f00; line-height: 18px; padding: 0 4px; }
.tools .glyph-dollar, .tools .glyph-pct { font-weight: 400; font-size: 19px; }
.caret { display: inline-block; width: 0; height: 0; border: 4px solid transparent; border-top-color: #666; border-bottom: 0; flex: none; }
.caret.flip { border-top: 0; border-bottom: 4px solid #666; }
.caret.west { border: 5px solid transparent; border-right: 6px solid #555; border-left: 0; }
.caret.east { border: 5px solid transparent; border-left: 6px solid #555; border-right: 0; }
.qat .caret { border-top-color: #fff; }
.qat .dimcaret-tool .caret { border-top-color: #5d9d79; }
</style>

<style scoped>
.app { position: relative; display: flex; flex-direction: column; min-height: 100vh; font-family: "Open Sans", "DejaVu Sans", sans-serif; font-size: 14px; color: #444; overflow: hidden; }
:deep(button), button { font: inherit; color: inherit; background: none; border: 0; padding: 0; margin: 0; white-space: nowrap; }
input, select, textarea { font: inherit; color: inherit; border: 0; background: none; padding: 0; margin: 0; outline: 0; min-width: 0; box-sizing: border-box; }

.top { position: relative; background: #217346; color: #fff; }
.art { position: absolute; right: 75px; top: 0; }
.titlebar { position: relative; display: flex; align-items: center; height: 41px; }
.qat { flex: 1 1 0; }
.titlebar h1 { font-size: 14px; font-weight: 400; margin: 0; }
.win { flex: 1 1 0; display: flex; justify-content: flex-end; }
.win button { width: 57px; display: flex; justify-content: center; }
.menu { position: relative; display: flex; height: 30px; align-items: stretch; }
.menu button { padding: 0 15px 2px; }
.menu .file { width: 77px; padding: 0 5px 0 0; }
.menu .home { width: 67px; background: #f1f1f1; color: #217346; padding: 0 0 2px; }
.tell { display: flex; align-items: center; gap: 5px; margin-left: 15px; padding-bottom: 2px; flex: 1; }
.tell input { flex: 1; }
.tell input::placeholder { color: #cfe3d7; opacity: 1; }
.user { align-self: center; margin-right: 11px; padding-bottom: 2px; }
.menu .share { display: flex; align-items: center; justify-content: center; gap: 4px; width: 75px; padding: 0; margin-right: 16px; background: #0e5c2f; height: 29px; }

.ribbon { display: flex; background: #f1f1f1; height: 111px; border-bottom: 1px solid #d2d2d2; }
.group { display: flex; flex-direction: column; padding-top: 4px; border-right: 1px solid #d4d4d4; box-sizing: border-box; margin-bottom: 2px; }
.group .body { display: flex; flex: 1; }
.group footer { position: relative; height: 18px; line-height: 18px; text-align: center; font-size: 13px; color: #666; }
.group footer.opts { padding-right: 22px; }
.group footer button { position: absolute; right: 6px; top: 5px; }
.clipboard { width: 189px; }
.font { width: 234px; }
.align { width: 344px; }
.number { width: 161px; }
.styles { width: 454px; }
.cells { width: 160px; }
.editing { width: 222px; }
.list { display: flex; flex-direction: column; margin-top: -1px; }
.list button { display: flex; align-items: center; gap: 5px; height: 28px; }
.caret.wide { margin-left: 4px; }
.caret.after { margin-left: 4px; }
.big { display: flex; flex-direction: column; align-items: center; width: 58px; line-height: 20px; }
.big svg { margin: 4px 0 0; height: 40px; }
.big > .caret { margin-top: 8px; }
.big span .caret { margin-bottom: 3px; }
.rows { flex-direction: column; gap: 10px; padding-top: 10px; }
.row { display: flex; align-items: center; height: 27px; }
.combo { position: relative; display: flex; align-items: center; height: 27px; box-sizing: border-box; border: 1px solid #c6c6c6; background: #fff; }
.combo select { appearance: none; width: 100%; height: 100%; padding-left: 3px; }
.combo .caret { position: absolute; right: 4px; top: 11px; }
.combo.name { width: 115px; margin-left: 3px; }
.combo.size { width: 60px; margin-left: -1px; }
.combo.fmt { width: 152px; margin-left: 4px; }
.grow { position: relative; width: 25px; font-size: 16px; padding-top: 4px; }
.mark { position: absolute; right: 1px; top: 3px; border: 3px solid transparent; border-top-color: #3f7fbf; border-bottom: 0; }
.mark.up { border-top: 0; border-bottom: 3px solid #3f7fbf; }
.text { display: flex; align-items: center; gap: 3px; padding-left: 5px; }
.text .caret.wide { margin-left: 9px; }
.big.cf { width: 86px; margin-left: 5px; }
.big.ft { width: 72px; }
.gallery { display: flex; flex: 1; height: 76px; margin: 2px 7px 0 0; border: 1px solid #ababab; background: #fff; box-sizing: border-box; }
.swatches { flex: 1; display: grid; grid-template-columns: 131px 126px; grid-template-rows: 38px 32px; column-gap: 3px; overflow: hidden; }
.swatches button { text-align: left; padding-left: 8px; color: #000; display: flex; align-items: center; overflow: hidden; }
.swatches .sel { border: 3px solid #c6c6c6; padding: 0 0 2px 5px; }
.swatches .bad { background: #ffc7ce; color: #9c2a06; margin: 3px 0 2px; padding: 0 0 2px 5px; }
.swatches .title2 { height: 30px; margin-top: 7px; font-size: 27px; line-height: 28px; color: #2a7ab8; align-items: flex-start; }
.title2 span { margin-top: -8px; }
.scroller { display: flex; flex-direction: column; width: 18px; border-left: 1px solid #ababab; }
.scroller button { flex: 1; display: flex; align-items: center; justify-content: center; }
.scroller .caret { border-left-width: 3px; border-right-width: 3px; }
.scroller button + button { border-top: 1px solid #ababab; }
.scroller .more { flex-direction: column; gap: 2px; }
.scroller .more::before { content: ""; width: 7px; height: 1px; background: #666; }
.cells .body { padding-left: 3px; }
.cells .big { width: 50px; }
.editing .list { padding-left: 9px; width: 112px; box-sizing: border-box; }
.editing .list button { gap: 4px; height: 27px; }
.editing .big { width: 51px; }
.collapse { margin: 84px 12px 0 auto; }

.formula { display: flex; align-items: flex-start; padding: 12px 6px 12px; }
.namebox { position: relative; display: flex; align-items: center; width: 250px; height: 30px; background: #fdfdfd; border: 1px solid #c6c6c6; box-sizing: border-box; }
.namebox input { width: 100%; padding-left: 7px; }
.namebox .caret { position: absolute; right: 8px; }
.grip { width: 3px; height: 14px; margin: 8px 17px; background: repeating-linear-gradient(#a8a8a8 0 3px, transparent 3px 5px); flex: none; }
.fx { display: flex; align-items: center; justify-content: space-around; width: 137px; height: 30px; background: #fdfdfd; border: 1px solid #c6c6c6; box-sizing: border-box; }
.fn { font-family: "Liberation Serif", serif; font-style: italic; font-weight: 700; font-size: 20px; line-height: 20px; color: #666; }
.fn small { font-size: 16px; }
.bar { display: flex; flex: 1; height: 54px; margin-left: 3px; background: #fdfdfd; border: 1px solid #c6c6c6; box-sizing: border-box; }
.bar textarea { flex: 1; resize: none; }
.bar svg { margin: 12px 5px; }

.work { display: flex; flex: 1; background: #e6e6e6; }
.vscroll { display: flex; flex-direction: column; width: 19px; margin: 2px 3px 0; }
.vscroll button { height: 19px; border: 1px solid #c0c0c0; background: #fff; display: flex; align-items: center; justify-content: center; box-sizing: border-box; flex: none; }
.vscroll .caret { border-left-width: 5px; border-right-width: 5px; }
.track { flex: 1; background: #dadada; }
.vscroll .thumb { display: block; height: 50%; background: #fff; border: 1px solid #ababab; box-sizing: border-box; }
.sheet { position: relative; flex: 1; background: linear-gradient(#e6e6e6, #e6e6e6) right / 27px 100% no-repeat #fff; font-family: "Open Sans", "DejaVu Sans Condensed", "DejaVu Sans", sans-serif; }
.sheet::after { content: ""; position: absolute; left: 0; top: 16px; bottom: 0; width: 1px; background: #999; }
table { table-layout: fixed; width: 100%; border-collapse: separate; border-spacing: 0; font-size: 11px; line-height: 14px; color: #000; }
.c-num { width: 27px; }
.c-a { width: 18px; }
.c-e { width: 19px; }
.c-b { width: 322px; }
.c-c { width: 220px; }
.c-d { width: 221px; }
.c-std { width: 62px; }
th, td { padding: 0; overflow: visible; white-space: nowrap; font-weight: 400; }
thead th { height: 17px; box-sizing: border-box; background: #e6e6e6; border-bottom: 1px solid #999; border-left: 1px solid #b0b0b0; font-size: 12px; line-height: 16px; }
thead th.end { border-left: 0; }
thead th.active { background: #d2d4d3; color: #217346; }
.corner i { display: block; width: 0; height: 0; margin: 4px auto 0; border: 5px solid transparent; border-bottom-color: #b0b0b0; border-left-color: #b0b0b0; }
tbody th { border-bottom: 1px solid #ababab; border-left: 1px solid #999; background: #e6e6e6; font-size: 12px; line-height: 14px; }
tbody th span { display: flex; align-items: flex-end; justify-content: center; overflow: hidden; box-sizing: border-box; }
tbody th.active { background: #d2d4d3; border-left: 2px solid #217346; color: #555; }
.asset { background: repeating-linear-gradient(135deg, #fbe2d5 0 3px, #fffaf7 3px 4px) right 45px top 0 / 763px 100% no-repeat; }
.b, .c, .d { position: relative; text-align: start; }
.b { padding-right: 2px; }
.asset .b, .asset .c, .asset .d { padding-bottom: 2px; }
.item .c, .item .d, .sum .c, .sum .d { padding-right: 7px; }
.asset .b { border-right: 1px solid #000; }
.asset .d { border-left: 1px solid #000; }
.asset .head .b, .asset .head .c, .asset .head .d { border-top: 1px solid #000; border-bottom: 2px solid #f00; padding-right: 2px; font-weight: 700; font-size: 10px; }
.last .b, .last .c, .last .d { border-bottom: 2px solid #f00; }
.sum .b, .sum .c, .sum .d { border-bottom: 1px solid #000; font-weight: 600; }
.sum .b { font-size: 10px; }
.title .b, .title .c, .title .d { border-bottom: 1px solid #000; text-align: center; font-family: "DejaVu Sans", sans-serif; font-size: 16px; line-height: 24px; padding-bottom: 2px; }
.box .b { border: 2px solid #000; border-bottom: 0; background: #ddebf7; text-align: center; font-family: "DejaVu Sans", sans-serif; font-size: 19px; line-height: 28px; padding: 0 0 2px; }
.grand .b, .grand .c, .grand .d { border-left: 2px solid #000; border-bottom: 2px solid #000; font-size: 19px; line-height: 26px; padding-right: 13px; }
.grand .b { border-right: 2px solid #000; padding-right: 3px; font-size: 18px; }
.filter { position: absolute; left: 0; bottom: 0; width: 21px; height: 21px; border: 1px solid #ababab; background: linear-gradient(#fff, #eef1f4); display: flex; align-items: center; justify-content: center; }
.cursor { position: relative; }
.cursor::after { content: ""; position: absolute; inset: -2px -1px -1px -1px; border: 2px solid #217346; }
.cursor::before { content: ""; position: absolute; z-index: 1; left: -3px; bottom: -3px; width: 5px; height: 5px; background: #217346; border: 1px solid #fff; }

.pdf, .back { background: #f0f0f0; border: 1px solid #fff; border-right: 2px solid #7a7a7a; border-bottom: 2px solid #7a7a7a; color: #000; box-sizing: border-box; font-size: 11px; }
.pdf { position: absolute; right: 836px; top: 32px; width: 103px; height: 26px; font-size: 12px; }
.panel { position: absolute; right: 833px; top: 68px; width: 334px; height: 379px; box-sizing: border-box; background: #1f4e79; border: 1px solid #41719c; }
.back { display: block; width: 124px; height: 24px; margin: 15px 113px 0 0; }
.cols { display: flex; gap: 9px; padding: 13px 30px 0 0; }
.col { display: flex; flex-direction: column; gap: 7px; width: 129px; }
.grp { display: flex; flex-direction: column; gap: 9px; }
.grp + .grp { gap: 7px; }
.grp button { height: 22px; box-sizing: border-box; background: #f2f2f2; border: 1px solid #41719c; color: #000; font-size: 10px; font-weight: 700; line-height: 12px; padding-bottom: 2px; }
.grp .small { font-size: 8px; }
.grp .tall { height: 36px; white-space: pre-wrap; padding: 0 16px; }
.grp .current { background: #99ffcc; }

.tabs { display: flex; height: 28px; background: #e6e6e6; border-top: 1px solid #999; border-bottom: 1px solid #bdbdbd; font-size: 16px; }
.hscroll { display: flex; width: 567px; margin: 4px 0 5px 25px; flex: none; }
.hscroll button { width: 19px; border: 1px solid #c0c0c0; background: #fff; display: flex; align-items: center; justify-content: center; box-sizing: border-box; }
.hscroll .track { display: flex; justify-content: flex-end; }
.hscroll .thumb { width: 21px; background: #fff; border: 1px solid #ababab; box-sizing: border-box; }
.tabs .grip { margin: 7px 14px 0; }
.add { padding: 4px 0 0; display: flex; align-items: flex-start; width: 28px; justify-content: center; }
.tabs > button { line-height: 20px; padding-bottom: 8px; position: relative; flex: none; }
.tabs .add { padding-bottom: 0; }
.tabs .loss { width: 74px; display: flex; gap: 6px; padding-right: 5px; box-sizing: border-box; justify-content: center; }
.loss b { color: #217346; }
.tabs .current { width: 136px; margin-top: -1px; height: 27px; padding: 0 0 5px; background: #fff; color: #217346; font-weight: 700; border: 1px solid #999; border-top: 0; border-bottom: 2px solid #217346; box-sizing: border-box; }
.s1, .s2, .s3, .s4, .s5, .s6 { background: linear-gradient(#999, #999) right 3px / 1px 20px no-repeat; }
.s1 { width: 277px; }
.s2 { width: 274px; }
.s3 { width: 61px; }
.s4 { width: 79px; }
.s5 { width: 183px; }
.s6 { width: 83px; }
.dots { width: 30px; padding-left: 6px; font-weight: 700; color: #217346; line-height: 22px; box-sizing: border-box; }
.tabs > .arrow { width: 28px; padding-bottom: 0; }
.arrow .caret.west { border-right-color: #0e5c2f; }
.arrow .caret.east { border-left-color: #0e5c2f; }

.status { display: flex; align-items: center; height: 26px; background: #f1f1f1; padding-left: 7px; font-size: 12px; gap: 18px; }
.status > span { padding-bottom: 2px; }
.views { display: flex; margin-left: auto; }
.views button { width: 41px; height: 26px; display: flex; align-items: center; justify-content: center; }
.views .on { background: #cfcfcf; }
.status .pm { font-size: 20px; width: 14px; line-height: 20px; font-weight: 600; margin: 0 -16px 0 -14px; }
.status .views + .pm { margin-left: -16px; }
.status input { appearance: none; width: 126px; height: 14px; background: linear-gradient(#aaa, #aaa) 62px center / 1px 7px no-repeat, linear-gradient(#aaa, #aaa) center / 100% 1px no-repeat; }
.status input::-webkit-slider-thumb { appearance: none; width: 5px; height: 14px; background: #666; }
.pct { width: 40px; color: #666; margin-left: 12px; }

.taskbar { display: flex; height: 50px; background: #3b4445; color: #fff; }
.start { width: 60px; display: flex; align-items: center; justify-content: center; }
.search { display: flex; align-items: center; gap: 12px; width: 360px; padding: 0 5px 0 15px; box-sizing: border-box; background: #f1f1f1; border: 1px solid #bbb; color: #222; }
.search input { flex: 1; font-size: 18px; height: 30px; }
.search input::placeholder { color: #333; opacity: 1; }
.card { display: flex; flex-direction: column; align-items: center; justify-content: center; width: 90px; height: 40px; border-radius: 8px; background: #f6ead6; color: #777; }
.card i { width: 11px; height: 11px; border-radius: 50%; background: linear-gradient(90deg, #eeb550 50%, #bbb 50%); }
.card b { font-size: 6px; line-height: 8px; font-weight: 600; margin-top: 2px; }
.card small { font-size: 4px; line-height: 5px; }
.appbtn { width: 62px; display: flex; align-items: center; justify-content: center; box-sizing: border-box; flex: none; }
.appbtn.running { background: linear-gradient(#76b9ed, #76b9ed) center bottom / 50px 3px no-repeat; }
.appbtn.front { background: linear-gradient(#76b9ed, #76b9ed) center bottom / 60px 3px no-repeat, #66696a; }
.tray { display: flex; align-items: center; margin-left: auto; padding-right: 4px; border-right: 1px solid #7a8081; margin-right: 4px; gap: 12px; }
.temp { font-size: 17px; margin-left: -3px; margin-right: 18px; }
.lang { margin: 0 12px 0 10px; font-size: 14px; }
.clock { display: flex; flex-direction: column; align-items: center; line-height: 23px; width: 84px; margin-right: 4px; }
.notes { position: relative; width: 44px; height: 50px; display: flex; align-items: center; justify-content: flex-start; margin-left: -8px; padding-left: 4px; }
.notes svg { margin-bottom: 6px; }
.notes em { position: absolute; left: 10px; top: 23px; width: 22px; height: 20px; line-height: 20px; border-radius: 50%; border: 1px solid #8a8f90; background: #2e3233; font-style: normal; font-weight: 700; font-size: 14px; text-align: center; }

.mark-layer { position: absolute; left: 845px; bottom: 20px; width: 230px; display: flex; flex-direction: column; align-items: center; pointer-events: none; color: #a4a4a4; opacity: .5; font-weight: 700; white-space: nowrap; }
.ar { font-family: "DejaVu Sans", sans-serif; font-size: 64px; line-height: 76px; color: #b5b5b5; }
.en { font-size: 37px; line-height: 42px; font-family: "Liberation Sans", sans-serif; }
</style>
